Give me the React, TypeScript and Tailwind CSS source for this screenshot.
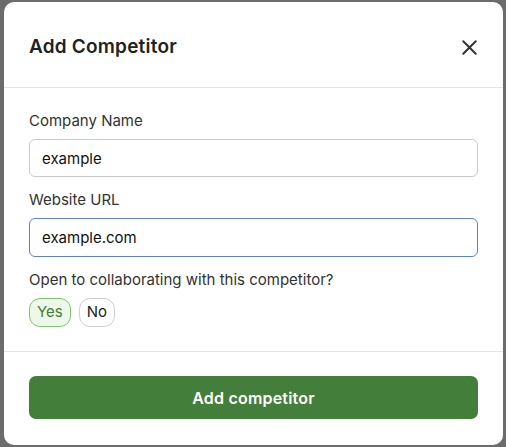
import React, { useState } from 'react';
import { X } from 'lucide-react';

const font = { fontFamily: 'Inter, "Noto Sans", sans-serif' };

const pill = (active: boolean) =>
    active
        ? 'h-[29px] px-[7px] rounded-[11px] border border-[#80c46f] bg-[#eef8ea] text-[#3f7f31] text-[15px]'
        : 'h-[29px] px-[7px] rounded-[11px] border border-[#cfcfd6] bg-white text-[#222] text-[15px]';

const App: React.FC = () => {
    const [name, setName] = useState('example');
    const [url, setUrl] = useState('example.com');
    const [open, setOpen] = useState<'yes' | 'no'>('yes');

    return (
        <div className="w-[506px] h-[447px] bg-[#6c6c6c] pt-[2px] pl-[4px] pr-[3px] pb-[2px] overflow-hidden" style={font}>
            <div className="h-full bg-white rounded-[10px] flex flex-col">
                <div className="h-[86px] px-[25px] pt-[5px] flex items-center justify-between border-b border-[#e4e4ea]">
                    <h2 className="text-[19px] font-semibold text-[#222] tracking-[0.2px]">Add Competitor</h2>
                    <button className="text-[#333] mr-[-4px]">
                        <X size={25} strokeWidth={1.9} />
                    </button>
                </div>

                <div className="px-[25px] pt-[23px] pb-[24px] border-b border-[#e4e4ea] flex flex-col">
                    <label className="text-[15px] text-[#333] leading-[20px]">Company Name</label>
                    <input
                        value={name}
                        onChange={(e) => setName(e.target.value)}
                        className="mt-[8px] h-[38px] rounded-[6px] border border-[#c9c9c9] px-[12px] text-[15px] text-[#111] outline-none"
                    />
                    <label className="mt-[13px] text-[15px] text-[#333] leading-[20px]">Website URL</label>
                    <input
                        value={url}
                        onChange={(e) => setUrl(e.target.value)}
                        className="mt-[8px] h-[39px] rounded-[6px] border border-[#5c80d8] px-[12px] text-[15px] text-[#111] outline-none"
                    />
                    <p className="mt-[13px] text-[15px] text-[#333] leading-[20px]">Open to collaborating with this competitor?</p>
                    <div className="mt-[8px] flex gap-[8px]">
                        <button onClick={() => setOpen('yes')} className={pill(open === 'yes')}>
                            Yes
                        </button>
                        <button onClick={() => setOpen('no')} className={pill(open === 'no')}>
                            No
                        </button>
                    </div>
                </div>

                <div className="px-[25px] pt-[24px]">
                    <button className="w-full h-[43px] rounded-[7px] bg-[#437e3b] text-white text-[16px] font-semibold tracking-[0.2px]">
                        Add competitor
                    </button>
                </div>
            </div>
        </div>
    );
};

export default App;
